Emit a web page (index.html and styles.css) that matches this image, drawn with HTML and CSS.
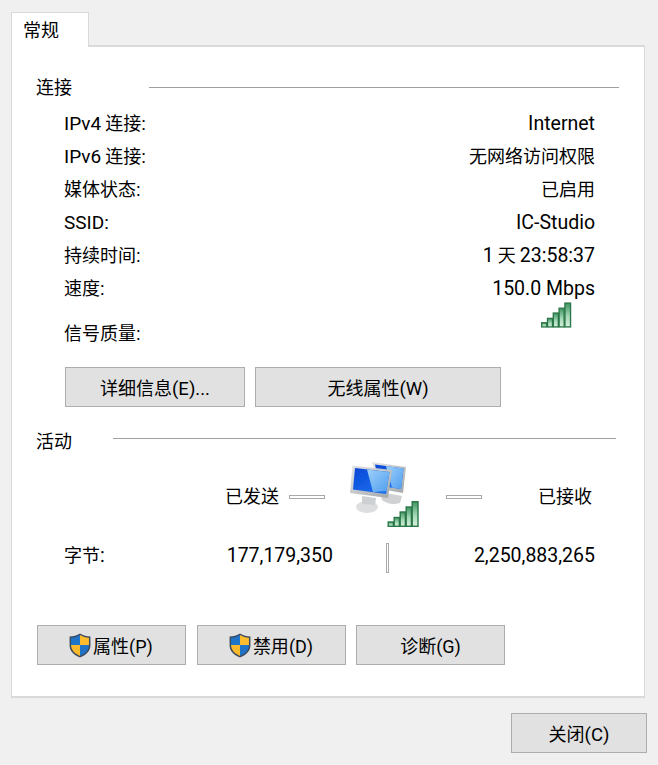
FILE: index.html
```html
<!DOCTYPE html>
<html lang="zh-CN">
<head>
<meta charset="utf-8">
<title>WLAN 状态</title>
<link rel="stylesheet" href="styles.css">
</head>
<body>
<svg class="defs" width="0" height="0" aria-hidden="true">
  <defs>
    <linearGradient id="bar" x1="0" y1="0" x2="0" y2="1">
      <stop offset="0" stop-color="#3f9463"/>
      <stop offset=".55" stop-color="#a4d8b6"/>
      <stop offset="1" stop-color="#d8f0df"/>
    </linearGradient>
    <symbol id="signal" viewBox="0 0 32 26">
      <g fill="url(#bar)" stroke="#2a7747" stroke-width="1.4">
        <rect x=".7" y="21" width="5.2" height="4.3"/>
        <rect x="6.7" y="16.5" width="5.2" height="8.8"/>
        <rect x="12.7" y="11" width="5.2" height="14.3"/>
        <rect x="18.7" y="6" width="5.2" height="19.3"/>
        <rect x="24.7" y=".7" width="5.8" height="24.6"/>
      </g>
    </symbol>
    <symbol id="shield" viewBox="0 0 22 24">
      <path d="M11 0.5 C8 2.5 4.5 3.4 1 3.4 V12 C1 17.5 5.5 21.5 11 23.5 C16.5 21.5 21 17.5 21 12 V3.4 C17.5 3.4 14 2.5 11 0.5Z" fill="#3d4a5c"/>
      <path d="M11 2 C8.4 3.6 5.4 4.4 2.4 4.5 V11.5 H11Z" fill="#1f74c8"/>
      <path d="M11 2 C13.6 3.6 16.6 4.4 19.6 4.5 V11.5 H11Z" fill="#fbbd2e"/>
      <path d="M2.4 11.5 C2.4 16.5 6.2 20 11 22 V11.5Z" fill="#f9b92c"/>
      <path d="M19.6 11.5 C19.6 16.5 15.8 20 11 22 V11.5Z" fill="#1f74c8"/>
    </symbol>
    <linearGradient id="screen" x1="0" y1="0" x2="1" y2="1">
      <stop offset="0" stop-color="#0a46d6"/>
      <stop offset="1" stop-color="#1c78f2"/>
    </linearGradient>
    <linearGradient id="glare" x1="0" y1="0" x2="1" y2="1">
      <stop offset="0" stop-color="#9fcff9"/>
      <stop offset="1" stop-color="#4f9ff0"/>
    </linearGradient>
    <linearGradient id="frame" x1="0" y1="0" x2="1" y2="1">
      <stop offset="0" stop-color="#e4e6e8"/>
      <stop offset="1" stop-color="#a2a6a9"/>
    </linearGradient>
  </defs>
</svg>

<div class="tabs"><div class="tab">常规</div></div>

<main class="panel">
  <section class="connection">
    <h2 class="group-title"><span>连接</span><i class="rule"></i></h2>
    <dl class="info">
      <div class="info-row"><dt><span class="lat">IPv4</span> 连接<span class="lat">:</span></dt><dd><span class="lat">Internet</span></dd></div>
      <div class="info-row"><dt><span class="lat">IPv6</span> 连接<span class="lat">:</span></dt><dd>无网络访问权限</dd></div>
      <div class="info-row"><dt>媒体状态<span class="lat">:</span></dt><dd>已启用</dd></div>
      <div class="info-row"><dt><span class="lat">SSID:</span></dt><dd><span class="lat">IC-Studio</span></dd></div>
      <div class="info-row"><dt>持续时间<span class="lat">:</span></dt><dd><span class="lat">1</span> 天 <span class="lat">23:58:37</span></dd></div>
      <div class="info-row"><dt>速度<span class="lat">:</span></dt><dd><span class="lat">150.0 Mbps</span></dd></div>
      <div class="info-row signal-row">
        <dt>信号质量<span class="lat">:</span></dt>
        <dd><svg class="signal-small"><use href="#signal"/></svg></dd>
      </div>
    </dl>
    <div class="button-row detail-buttons">
      <button class="btn btn-detail"><span>详细信息<span class="lat">(E)...</span></span></button>
      <button class="btn btn-wireless"><span>无线属性<span class="lat">(W)</span></span></button>
    </div>
  </section>

  <section class="activity">
    <h2 class="group-title activity-title"><span>活动</span><i class="rule"></i></h2>
    <div class="stats">
      <div></div>
      <div class="sent"><span>已发送</span><i class="dash"></i></div>
      <div class="pc">
        <svg class="pc-icon" viewBox="0 0 70 65" aria-hidden="true">
          <defs><filter id="soft"><feGaussianBlur stdDeviation=".4"/></filter></defs>
          <g filter="url(#soft)">
            <path d="M30 30 L52 34 L50 41 Q40 44 32 38Z" fill="#cfd1d3"/>
            <path d="M22 0 L56 5 L53 31 L30 27Z" fill="url(#frame)"/>
            <path d="M25 2.5 L53.5 6.5 L51 27 L30 24Z" fill="url(#screen)"/>
            <path d="M36 4 L53.5 6.5 L51 27 L42 25.5Z" fill="url(#glare)"/>
            <ellipse cx="17" cy="45" rx="11" ry="6" fill="#dcdedf"/>
            <path d="M12 34 L26 36 L25 43 L12 42Z" fill="#cdd0d2"/>
            <path d="M2.5 3.5 L42 8 L38 36 L0 31Z" fill="url(#frame)"/>
            <path d="M5 6 L39.5 10 L36 32 L3 27.5Z" fill="url(#screen)"/>
            <path d="M17 7.4 L39.5 10 L36.5 29 L23 30Z" fill="url(#glare)"/>
          </g>
        </svg>
        <svg class="signal-large"><use href="#signal"/></svg>
      </div>
      <div class="received"><i class="dash"></i><span>已接收</span></div>

      <div class="bytes-label">字节<span class="lat">:</span></div>
      <div class="bytes-value"><span class="lat">177,179,350</span></div>
      <div class="divider-cell"><i class="vdash"></i></div>
      <div class="bytes-value"><span class="lat">2,250,883,265</span></div>
    </div>
    <div class="button-row action-buttons">
      <button class="btn btn-action"><svg class="shield"><use href="#shield"/></svg><span>属性<span class="lat">(P)</span></span></button>
      <button class="btn btn-action btn-disable"><svg class="shield"><use href="#shield"/></svg><span>禁用<span class="lat">(D)</span></span></button>
      <button class="btn btn-action"><span>诊断<span class="lat">(G)</span></span></button>
    </div>
  </section>
</main>

<footer class="footer"><button class="btn btn-close"><span>关闭<span class="lat">(C)</span></span></button></footer>
</body>
</html>
```
FILE: styles.css
```css
* { box-sizing: border-box; }
html, body { margin: 0; }
body {
  width: 658px;
  height: 765px;
  overflow: hidden;
  background: #f0f0f0;
  color: #000;
  font-family: "Noto Sans CJK SC", "Noto Sans", sans-serif;
  font-size: 18px;
  line-height: 24px;
}
.lat { font-family: Roboto, "Noto Sans", sans-serif; font-size: 19.5px; line-height: 1; }
dt .lat { font-size: 19px; }
.btn .lat { font-size: 18.5px; }
.btn-action .lat { font-size: 18px; }
.defs { position: absolute; }
.tabs { height: 45px; padding: 12px 0 0 11px; }
.tab {
  position: relative;
  z-index: 1;
  width: 78px;
  height: 35px;
  padding: 4px 0 0 11px;
  background: #fff;
  border: 1.5px solid #d9d9d9;
  border-bottom: 0;
}
.panel {
  width: 634px;
  height: 653px;
  margin-left: 11px;
  background: #fff;
  border: 1.5px solid #d9d9d9;
  border-width: 2px 1px;
  padding-top: 27px;
}
.group-title {
  display: flex;
  align-items: flex-start;
  margin: 0;
  padding: 0 25px 0 24px;
  font: inherit;
  gap: 77px;
}
.rule { flex: 1; height: 1px; margin-top: 13px; background: #a0a0a0; }
.activity-title { gap: 41px; padding-right: 28px; }
.activity-title .rule { margin-top: 10px; }
.info { margin: 7px 0 0; padding: 0 49px 0 52px; }
.info-row { display: flex; justify-content: space-between; height: 33px; align-items: center; }
.info-row dd { margin: 0; }
.signal-row { height: 45px; align-items: flex-start; }
.signal-row dt { margin-top: 17px; }
.signal-row dd { margin: -1px 23px 0 0; }
.signal-small { display: block; width: 31px; height: 26px; }
.button-row { display: flex; }
.detail-buttons { gap: 10px; padding-left: 53px; margin-top: 19px; }
.btn {
  height: 40px;
  padding: 0;
  background: #e1e1e1;
  border: 1.5px solid #adadad;
  color: #000;
  font: inherit;
  display: flex;
  align-items: center;
  justify-content: center;
}
.btn-detail { width: 180px; }
.btn-wireless { width: 246px; }
.activity { margin-top: 21px; }
.stats {
  display: grid;
  grid-template-columns: 161px 108px 108px 154px;
  grid-template-rows: 65px 30px;
  margin: 10px 0 0 52px;
  row-gap: 16px;
}
.sent, .received { display: flex; align-items: center; gap: 10px; }
.received { justify-content: space-between; gap: 0; padding: 0 3px 0 5px; }
.dash { width: 36px; height: 4px; margin-top: 4px; border: 1px solid #a9a9a9; background: #fff; }
.pc { position: relative; }
.pc-icon { position: absolute; left: 17px; top: 0; width: 70px; height: 65px; }
.signal-large { position: absolute; left: 54px; top: 39px; width: 33px; height: 26px; }
.bytes-label, .bytes-value { align-self: center; padding-bottom: 8px; }
.bytes-value { text-align: right; }
.divider-cell { display: flex; justify-content: center; }
.vdash { width: 3px; height: 30px; border: 1px solid #a9a9a9; background: #fff; }
.action-buttons { gap: 10px; padding-left: 25px; margin-top: 52px; }
.btn-action { width: 149px; }
.btn-disable { margin-left: 1px; }
.shield { width: 24px; height: 25px; flex: none; margin: 0 1px 0 -2px; }
.footer { display: flex; justify-content: flex-end; padding: 15px 11px 0 0; }
.btn-close { width: 136px; }
```
